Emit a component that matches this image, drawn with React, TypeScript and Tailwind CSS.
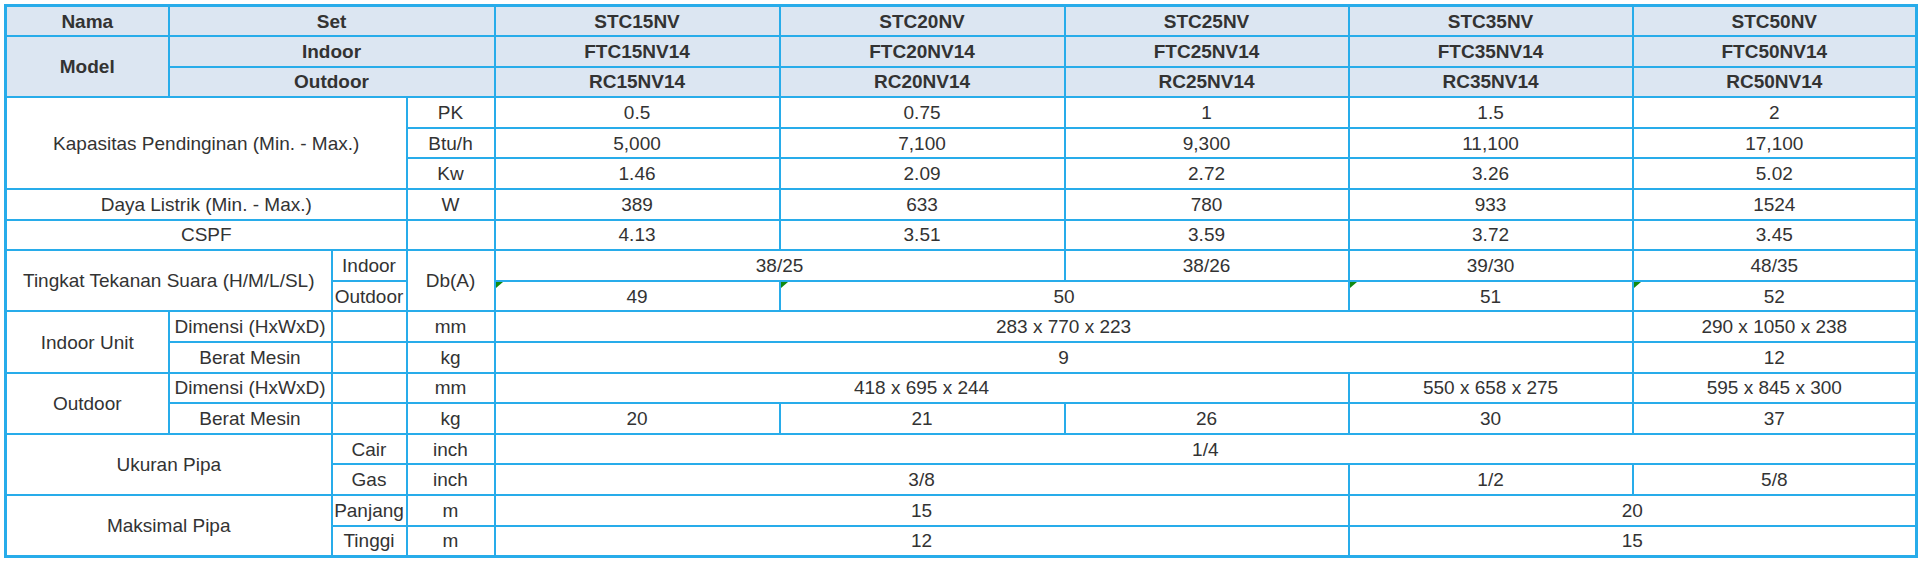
const th = "border-2 border-[#28acea] bg-[#dce6f2] font-bold text-center p-0";
const td = "border-2 border-[#28acea] text-center p-0";
const tdf = "border-2 border-[#28acea] text-center p-0 relative";

function Flag() {
  return (
    <span className="absolute left-0 top-0 w-0 h-0 border-t-[6px] border-r-[7px] border-t-[#118a11] border-r-transparent" />
  );
}

const models = [
  { set: "STC15NV", indoor: "FTC15NV14", outdoor: "RC15NV14", pk: "0.5", btu: "5,000", kw: "1.46", w: "389", cspf: "4.13", berat: "20" },
  { set: "STC20NV", indoor: "FTC20NV14", outdoor: "RC20NV14", pk: "0.75", btu: "7,100", kw: "2.09", w: "633", cspf: "3.51", berat: "21" },
  { set: "STC25NV", indoor: "FTC25NV14", outdoor: "RC25NV14", pk: "1", btu: "9,300", kw: "2.72", w: "780", cspf: "3.59", berat: "26" },
  { set: "STC35NV", indoor: "FTC35NV14", outdoor: "RC35NV14", pk: "1.5", btu: "11,100", kw: "3.26", w: "933", cspf: "3.72", berat: "30" },
  { set: "STC50NV", indoor: "FTC50NV14", outdoor: "RC50NV14", pk: "2", btu: "17,100", kw: "5.02", w: "1524", cspf: "3.45", berat: "37" },
];

export default function App() {
  return (
    <div className="bg-white min-h-[564px] pl-[4px] pt-[4px]">
      <table className="table-fixed border-collapse border-[3px] border-[#28acea] w-[1911px] text-[19px] leading-none text-[#333333] font-['Liberation_Sans',Arial,sans-serif]">
        <colgroup>
          <col className="w-[163px]" />
          <col className="w-[163px]" />
          <col className="w-[75px]" />
          <col className="w-[88px]" />
          <col className="w-[285px]" />
          <col className="w-[285px]" />
          <col className="w-[284px]" />
          <col className="w-[284px]" />
          <col className="w-[284px]" />
        </colgroup>
        <tbody>
          <tr className="h-[30.6px]">
            <td className={th}>Nama</td>
            <td className={th} colSpan={3}>Set</td>
            {models.map((m) => (
              <td key={m.set} className={th}>{m.set}</td>
            ))}
          </tr>
          <tr className="h-[30.6px]">
            <td className={th} rowSpan={2}>Model</td>
            <td className={th} colSpan={3}>Indoor</td>
            {models.map((m) => (
              <td key={m.indoor} className={th}>{m.indoor}</td>
            ))}
          </tr>
          <tr className="h-[30.6px]">
            <td className={th} colSpan={3}>Outdoor</td>
            {models.map((m) => (
              <td key={m.outdoor} className={th}>{m.outdoor}</td>
            ))}
          </tr>

          <tr className="h-[30.6px]">
            <td className={td} colSpan={3} rowSpan={3}>Kapasitas Pendinginan (Min. - Max.)</td>
            <td className={td}>PK</td>
            {models.map((m) => (
              <td key={m.set} className={td}>{m.pk}</td>
            ))}
          </tr>
          <tr className="h-[30.6px]">
            <td className={td}>Btu/h</td>
            {models.map((m) => (
              <td key={m.set} className={td}>{m.btu}</td>
            ))}
          </tr>
          <tr className="h-[30.6px]">
            <td className={td}>Kw</td>
            {models.map((m) => (
              <td key={m.set} className={td}>{m.kw}</td>
            ))}
          </tr>
          <tr className="h-[30.6px]">
            <td className={td} colSpan={3}>Daya Listrik (Min. - Max.)</td>
            <td className={td}>W</td>
            {models.map((m) => (
              <td key={m.set} className={td}>{m.w}</td>
            ))}
          </tr>
          <tr className="h-[30.6px]">
            <td className={td} colSpan={3}>CSPF</td>
            <td className={td}></td>
            {models.map((m) => (
              <td key={m.set} className={td}>{m.cspf}</td>
            ))}
          </tr>

          <tr className="h-[30.6px]">
            <td className={td} colSpan={2} rowSpan={2}>Tingkat Tekanan Suara (H/M/L/SL)</td>
            <td className={td}>Indoor</td>
            <td className={td} rowSpan={2}>Db(A)</td>
            <td className={td} colSpan={2}>38/25</td>
            <td className={td}>38/26</td>
            <td className={td}>39/30</td>
            <td className={td}>48/35</td>
          </tr>
          <tr className="h-[30.6px]">
            <td className={td}>Outdoor</td>
            <td className={tdf}><Flag />49</td>
            <td className={tdf} colSpan={2}><Flag />50</td>
            <td className={tdf}><Flag />51</td>
            <td className={tdf}><Flag />52</td>
          </tr>

          <tr className="h-[30.6px]">
            <td className={td} rowSpan={2}>Indoor Unit</td>
            <td className={td}>Dimensi (HxWxD)</td>
            <td className={td}></td>
            <td className={td}>mm</td>
            <td className={td} colSpan={4}>283 x 770 x 223</td>
            <td className={td}>290 x 1050 x 238</td>
          </tr>
          <tr className="h-[30.6px]">
            <td className={td}>Berat Mesin</td>
            <td className={td}></td>
            <td className={td}>kg</td>
            <td className={td} colSpan={4}>9</td>
            <td className={td}>12</td>
          </tr>

          <tr className="h-[30.6px]">
            <td className={td} rowSpan={2}>Outdoor</td>
            <td className={td}>Dimensi (HxWxD)</td>
            <td className={td}></td>
            <td className={td}>mm</td>
            <td className={td} colSpan={3}>418 x 695 x 244</td>
            <td className={td}>550 x 658 x 275</td>
            <td className={td}>595 x 845 x 300</td>
          </tr>
          <tr className="h-[30.6px]">
            <td className={td}>Berat Mesin</td>
            <td className={td}></td>
            <td className={td}>kg</td>
            {models.map((m) => (
              <td key={m.set} className={td}>{m.berat}</td>
            ))}
          </tr>

          <tr className="h-[30.6px]">
            <td className={td} colSpan={2} rowSpan={2}>Ukuran Pipa</td>
            <td className={td}>Cair</td>
            <td className={td}>inch</td>
            <td className={td} colSpan={5}>1/4</td>
          </tr>
          <tr className="h-[30.6px]">
            <td className={td}>Gas</td>
            <td className={td}>inch</td>
            <td className={td} colSpan={3}>3/8</td>
            <td className={td}>1/2</td>
            <td className={td}>5/8</td>
          </tr>

          <tr className="h-[30.6px]">
            <td className={td} colSpan={2} rowSpan={2}>Maksimal Pipa</td>
            <td className={td}>Panjang</td>
            <td className={td}>m</td>
            <td className={td} colSpan={3}>15</td>
            <td className={td} colSpan={2}>20</td>
          </tr>
          <tr className="h-[30.6px]">
            <td className={td}>Tinggi</td>
            <td className={td}>m</td>
            <td className={td} colSpan={3}>12</td>
            <td className={td} colSpan={2}>15</td>
          </tr>
        </tbody>
      </table>
    </div>
  );
}
